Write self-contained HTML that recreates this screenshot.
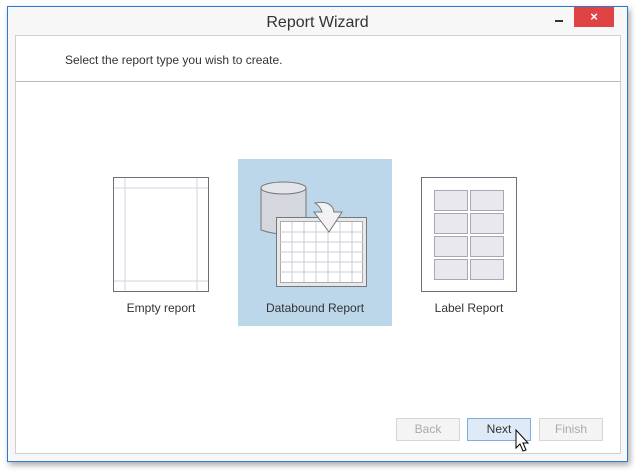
<!DOCTYPE html>
<html><head><style>
body{margin:0;width:636px;height:474px;background:#fff;font-family:"Liberation Sans",sans-serif;position:relative;overflow:hidden}
.win{position:absolute;left:7px;top:6px;width:619px;height:454px;background:#f7f7f7;border:1px solid #2b7ad0;box-shadow:2px 3px 6px rgba(0,0,0,.35)}
.title{position:absolute;left:0;right:0;top:7px;text-align:center;font-size:16px;color:#333}
.close{position:absolute;left:566px;top:0;width:40px;height:20px;background:#e04343;color:#fff;text-align:center;font-size:13px;font-weight:bold;line-height:19px}
.min{position:absolute;left:547px;top:13px;width:8px;height:2px;background:#333}
.panel{position:absolute;left:7px;top:28px;width:604px;height:417px;background:#fff;border:1px solid #d0d0d0}
.sep{position:absolute;left:0;right:0;top:45px;height:1px;background:#b8b8b8}
.hint{position:absolute;left:49px;top:17px;font-size:12px;color:#333}
.lbl{position:absolute;font-size:12px;color:#333;text-align:center;width:154px}
.btn{position:absolute;top:411px;width:62px;height:21px;border:1px solid #d6d6d6;background:#f4f4f4;color:#aaa;font-size:12px;text-align:center;line-height:21px}
</style></head><body>
<div class="win">
<div class="title">Report Wizard</div>
<div class="min"></div><div class="close">×</div>
<div class="panel">
<div class="hint">Select the report type you wish to create.</div>
<div class="sep"></div>
</div>
<div class="btn" style="left:388px">Back</div>
<div class="btn" style="left:459px;background:#dfeaf7;border-color:#7eaee0;color:#333">Next</div>
<div class="btn" style="left:531px">Finish</div>
</div>
<div style="position:absolute;left:238px;top:159px;width:154px;height:167px;background:#bdd7ea"></div>
<svg style="position:absolute;left:0;top:0" width="636" height="474">
<g fill="none">
<rect x="113.5" y="177.5" width="95" height="114" fill="#fff" stroke="#6b6f7a"/>
<path d="M114 188H208M114 281H208M125 178V291M197 178V291" stroke="#d4d4de"/>
<rect x="421.5" y="177.5" width="95" height="114" fill="#fff" stroke="#6b6f7a"/>
<g stroke="#a8a8b0" fill="#e8e8ee">
<rect x="434.5" y="190.5" width="33" height="20"/><rect x="470.5" y="190.5" width="33" height="20"/>
<rect x="434.5" y="213.5" width="33" height="20"/><rect x="470.5" y="213.5" width="33" height="20"/>
<rect x="434.5" y="236.5" width="33" height="20"/><rect x="470.5" y="236.5" width="33" height="20"/>
<rect x="434.5" y="259.5" width="33" height="20"/><rect x="470.5" y="259.5" width="33" height="20"/>
</g>
<path d="M261 188V230Q284 238 306 230V188" fill="#d5d7de" stroke="#777"/>
<ellipse cx="283.5" cy="188" rx="22.5" ry="6" fill="#e4e5ea" stroke="#777"/>
<rect x="276.5" y="217.5" width="90" height="69" fill="#e8e8ec" stroke="#777"/>
<rect x="280.5" y="221.5" width="82" height="61" fill="#fff" stroke="#aaa"/>
<path d="M280 232H363M280 242H363M280 252H363M280 262H363M280 272H363M292 222V282M304 222V282M316 222V282M328 222V282M340 222V282M352 222V282" stroke="#ccccd4"/>
<path d="M315 203Q332 200 334 212H342L329 232L314 212H322Q320 206 315 203Z" fill="#f2f2f4" stroke="#777"/>
</g>
<path d="M516 430V448L520 444L523 451L526 450L523 443H528Z" fill="#fff" stroke="#000"/>
</svg>
<div class="lbl" style="left:84px;top:301px">Empty report</div>
<div class="lbl" style="left:238px;top:301px">Databound Report</div>
<div class="lbl" style="left:392px;top:301px">Label Report</div>
</body></html>
